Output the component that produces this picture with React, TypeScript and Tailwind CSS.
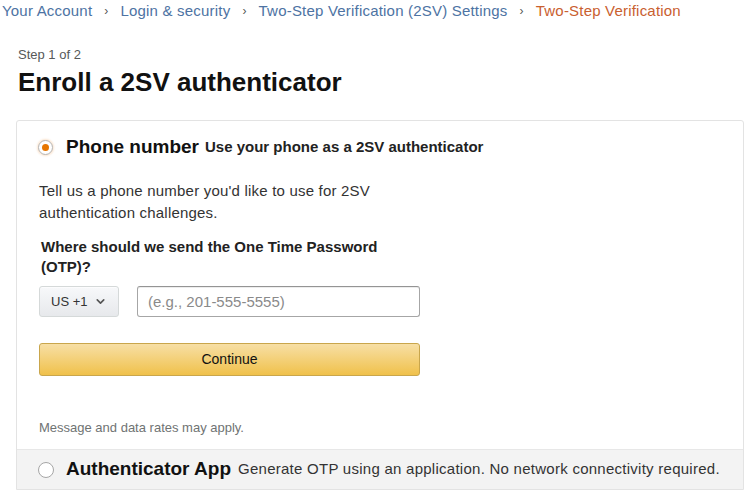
import { ChevronDown } from "lucide-react";

const CRUMBS = ["Your Account", "Login & security", "Two-Step Verification (2SV) Settings"];

function Radio({ checked }: { checked?: boolean }) {
  return (
    <span
      className={
        "inline-flex items-center justify-center rounded-full border shrink-0 bg-white " +
        (checked
          ? "size-[15px] border-[#b5b5b5] shadow-[0_0_2px_1px_rgb(228_121_17/0.2)]"
          : "size-[16px] border-[#a6a6a6]")
      }
    >
      {checked && <span className="size-[7px] rounded-full bg-[#e77600]" />}
    </span>
  );
}

export default function App() {
  return (
    <div className="min-h-screen bg-white text-[#111] font-['Liberation_Sans',Arial,sans-serif]">
      <nav className="flex items-center h-[22px] pl-[2px] text-[15px] tracking-[0.2px] text-[#4d73a3]">
        {CRUMBS.map((c) => (
          <span key={c} className="flex items-center">
            <span>{c}</span>
            <span className="mx-[12px] text-[#555] text-[12px]">›</span>
          </span>
        ))}
        <span className="text-[#c9602f]">Two-Step Verification</span>
      </nav>

      <div className="pl-[18px] pt-[24px]">
        <div className="text-[13px] leading-[18px] text-[#565959]">Step 1 of 2</div>
        <h1 className="text-[26px] leading-[32px] font-bold mt-[2px]">Enroll a 2SV authenticator</h1>
      </div>

      <div className="ml-4 mr-[3px] mt-[22px] border border-[#e3e3e3] rounded-t-[3px]">
        <div className="px-[21px] pt-[16px] pb-[12px]">
          <label className="flex items-center h-[20px]">
            <Radio checked />
            <span className="ml-[13px] text-[19px] font-bold">Phone number</span>
            <span className="ml-[6px] text-[15px] font-bold text-[#222]">Use your phone as a 2SV authenticator</span>
          </label>

          <p className="mt-[23px] text-[15px] tracking-[0.2px] leading-[22px] text-[#333] w-[345px] pl-[1px]">
            Tell us a phone number you'd like to use for 2SV authentication challenges.
          </p>

          <div className="mt-[13px] pl-[3px] w-[345px] text-[15px] leading-[20px] font-bold text-[#222]">
            Where should we send the One Time Password (OTP)?
          </div>

          <div className="mt-[9px] flex items-center gap-[18px] pl-[1px]">
            <button className="flex items-center justify-between whitespace-nowrap h-[31px] w-[80px] px-[11px] rounded-[3px] border border-[#d5d9d9] bg-[linear-gradient(#f7f8fa,#e7e9ec)] shadow-[0_1px_0_rgb(255_255_255/0.6)_inset] text-[13px] text-[#333]">
              US +1
              <ChevronDown className="size-[13px] text-[#555]" strokeWidth={3} />
            </button>
            <input
              className="h-[31px] w-[283px] px-[10px] rounded-[3px] border border-[#a6a6a6] border-t-[#949494] shadow-[0_1px_0_rgb(0_0_0/0.07)_inset] text-[15px] placeholder:text-[#8a8a8a] outline-none"
              placeholder="(e.g., 201-555-5555)"
            />
          </div>

          <button className="mt-[26px] ml-[1px] block h-[33px] w-[381px] rounded-[3px] border border-[#c9a64c] bg-[linear-gradient(#f7dfa5,#f0c14b)] text-[14px] text-[#111]">
            Continue
          </button>

          <p className="mt-[43px] pl-[1px] text-[13px] leading-[18px] text-[#6f7373]">
            Message and data rates may apply.
          </p>
        </div>

        <label className="flex items-center h-[40px] px-[21px] bg-[#f3f3f3] border-t border-[#e7e7e7]">
          <Radio />
          <span className="ml-[12px] text-[19px] font-bold">Authenticator App</span>
          <span className="ml-[7px] text-[15px] tracking-[0.26px] text-[#333]">
            Generate OTP using an application. No network connectivity required.
          </span>
        </label>
      </div>
    </div>
  );
}
